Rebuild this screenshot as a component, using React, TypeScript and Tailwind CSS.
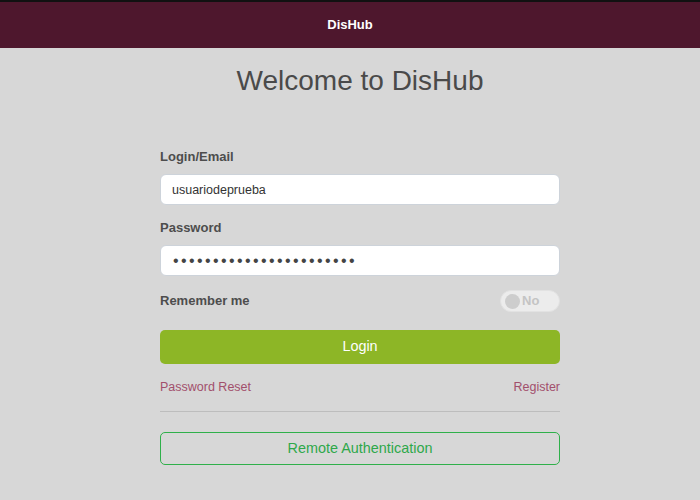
export default function App() {
  return (
    <div className="min-h-screen w-full bg-[#d7d7d7] font-['Liberation_Sans',Arial,sans-serif]">
      <header className="flex h-[48px] items-center justify-center border-t-2 border-[#111] bg-[#4e172d]">
        <span className="text-[13px] font-bold text-white">DisHub</span>
      </header>

      <main className="pl-[20px]">
        <h1 className="mt-[16px] text-center text-[28px] leading-[34px] text-[#4a4a4a]">Welcome to DisHub</h1>

        <form className="mx-auto mt-[51px] w-[400px]" onSubmit={(e) => e.preventDefault()}>
          <label className="block text-[13px] font-bold leading-[16px] text-[#4d4d4d]">Login/Email</label>
          <input
            className="mt-[9px] block h-[31px] w-full rounded-[6px] border border-[#cdd3da] bg-white px-[11px] text-[12.5px] text-[#333] outline-none"
            defaultValue="usuariodeprueba"
          />

          <label className="mt-[15px] block text-[13px] font-bold leading-[16px] text-[#4d4d4d]">Password</label>
          <input
            type="password"
            className="mt-[9px] block h-[31px] w-full rounded-[6px] border border-[#cdd3da] bg-white px-[12px] text-[16px] tracking-[2.4px] text-[#444] outline-none"
            defaultValue="abcdefghijklmnopqrstuvw"
          />

          <div className="mt-[14px] flex items-center justify-between">
            <span className="text-[13px] font-bold leading-[16px] text-[#4d4d4d]">Remember me</span>
            <div className="flex h-[22px] w-[60px] items-center gap-[2px] rounded-full border border-[#e2e2e2] bg-[#ececec] pl-[4px]">
              <span className="h-[15px] w-[15px] rounded-full bg-[#cdcdcd]" />
              <span className="text-[13px] font-bold text-[#c4c4c4]">No</span>
            </div>
          </div>

          <button
            type="submit"
            className="mt-[18px] block h-[34px] w-full rounded-[5px] bg-[#8db626] text-[14.4px] text-white"
          >
            Login
          </button>

          <div className="mt-[15px] flex justify-between text-[12.5px] leading-[16px] text-[#a24f6c]">
            <a href="#">Password Reset</a>
            <a href="#">Register</a>
          </div>

          <div className="mt-[16px] h-px bg-[#bdbdbd]" />

          <button
            type="button"
            className="mt-[20px] block h-[33px] w-full rounded-[5px] border border-[#2fb04a] text-[14.4px] text-[#2ea84a]"
          >
            Remote Authentication
          </button>
        </form>
      </main>
    </div>
  );
}
